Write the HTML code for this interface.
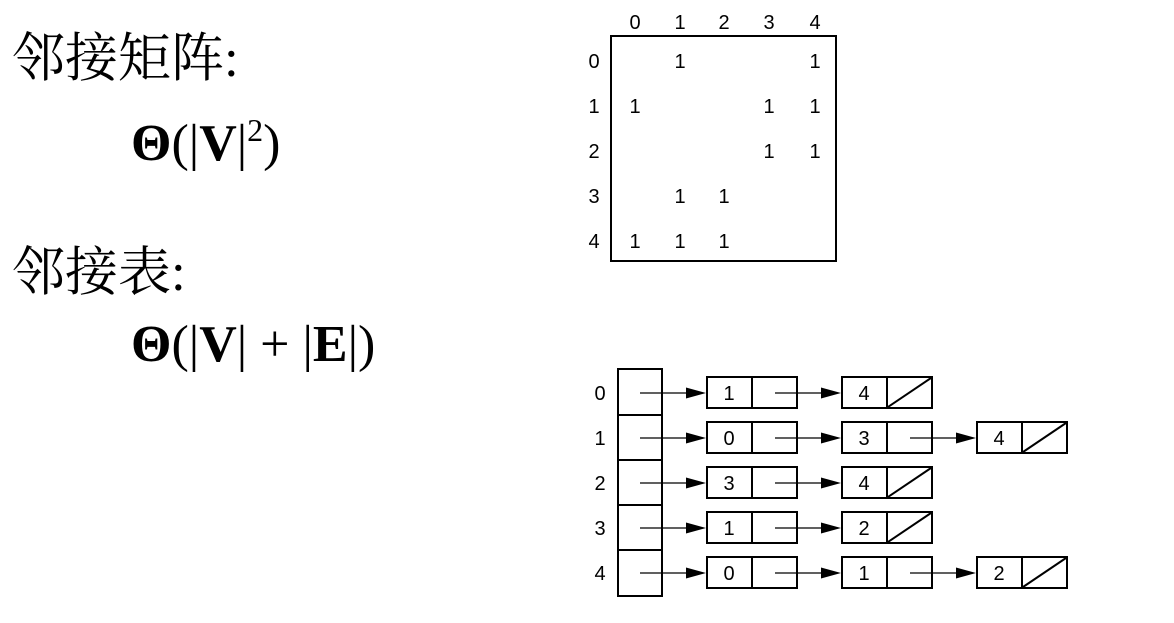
<!DOCTYPE html>
<html><head><meta charset="utf-8"><style>
html,body{margin:0;padding:0;background:#fff;width:1174px;height:623px;overflow:hidden}
svg{display:block}
.cj{font-family:"Liberation Serif","Noto Serif CJK SC",serif;font-size:53px}
.m{font-family:"Liberation Serif",serif;font-size:52px}
.d{font-family:"Liberation Sans",sans-serif;font-size:20px;text-anchor:middle}
</style></head><body>
<svg width="1174" height="623" xmlns="http://www.w3.org/2000/svg">
<text class="cj" x="12" y="76">邻接矩阵:</text>
<text class="m" x="131" y="160"><tspan font-weight="bold">Θ</tspan>(|<tspan font-weight="bold">V</tspan>|<tspan font-size="32" dy="-19">2</tspan><tspan dy="19">)</tspan></text>
<text class="cj" x="12" y="290">邻接表:</text>
<text class="m" x="131" y="361"><tspan font-weight="bold">Θ</tspan>(|<tspan font-weight="bold">V</tspan>| + |<tspan font-weight="bold">E</tspan>|)</text>

<rect x="611" y="36" width="225" height="225" fill="none" stroke="#000" stroke-width="2"/>
<g class="d">
<text x="635" y="29">0</text><text x="680" y="29">1</text><text x="724" y="29">2</text><text x="769" y="29">3</text><text x="815" y="29">4</text>
<text x="594" y="68">0</text><text x="594" y="113">1</text><text x="594" y="158">2</text><text x="594" y="203">3</text><text x="594" y="248">4</text>
<text x="680" y="68">1</text><text x="815" y="68">1</text>
<text x="635" y="113">1</text><text x="769" y="113">1</text><text x="815" y="113">1</text>
<text x="769" y="158">1</text><text x="815" y="158">1</text>
<text x="680" y="203">1</text><text x="724" y="203">1</text>
<text x="635" y="248">1</text><text x="680" y="248">1</text><text x="724" y="248">1</text>
</g>

<g stroke="#000" stroke-width="2" fill="none">
<rect x="618" y="369" width="44" height="227"/>
<line x1="618" y1="415" x2="662" y2="415"/><line x1="618" y1="460" x2="662" y2="460"/>
<line x1="618" y1="505" x2="662" y2="505"/><line x1="618" y1="550" x2="662" y2="550"/>
</g>
<defs>
<g id="node">
<rect x="0" y="0" width="90" height="31" fill="none" stroke="#000" stroke-width="2"/>
<line x1="45" y1="0" x2="45" y2="31" stroke="#000" stroke-width="2"/>
</g>
<g id="nil"><line x1="46" y1="30" x2="89" y2="1" stroke="#000" stroke-width="2"/></g>
<g id="arr"><line x1="0" y1="0" x2="50" y2="0" stroke="#000" stroke-width="1.2"/><polygon points="46,-5.5 66,0 46,5.5" fill="#000"/></g>
</defs>
<g class="d">
<text x="600" y="400">0</text><text x="600" y="445">1</text><text x="600" y="490">2</text><text x="600" y="535">3</text><text x="600" y="580">4</text>
</g>
<use href="#arr" x="640" y="393"/><use href="#node" x="707" y="377"/><text class="d" x="729" y="400">1</text>
<use href="#arr" x="775" y="393"/><use href="#node" x="842" y="377"/><text class="d" x="864" y="400">4</text><use href="#nil" x="842" y="377"/>
<use href="#arr" x="640" y="438"/><use href="#node" x="707" y="422"/><text class="d" x="729" y="445">0</text>
<use href="#arr" x="775" y="438"/><use href="#node" x="842" y="422"/><text class="d" x="864" y="445">3</text>
<use href="#arr" x="910" y="438"/><use href="#node" x="977" y="422"/><text class="d" x="999" y="445">4</text><use href="#nil" x="977" y="422"/>
<use href="#arr" x="640" y="483"/><use href="#node" x="707" y="467"/><text class="d" x="729" y="490">3</text>
<use href="#arr" x="775" y="483"/><use href="#node" x="842" y="467"/><text class="d" x="864" y="490">4</text><use href="#nil" x="842" y="467"/>
<use href="#arr" x="640" y="528"/><use href="#node" x="707" y="512"/><text class="d" x="729" y="535">1</text>
<use href="#arr" x="775" y="528"/><use href="#node" x="842" y="512"/><text class="d" x="864" y="535">2</text><use href="#nil" x="842" y="512"/>
<use href="#arr" x="640" y="573"/><use href="#node" x="707" y="557"/><text class="d" x="729" y="580">0</text>
<use href="#arr" x="775" y="573"/><use href="#node" x="842" y="557"/><text class="d" x="864" y="580">1</text>
<use href="#arr" x="910" y="573"/><use href="#node" x="977" y="557"/><text class="d" x="999" y="580">2</text><use href="#nil" x="977" y="557"/>
</svg>
</body></html>
